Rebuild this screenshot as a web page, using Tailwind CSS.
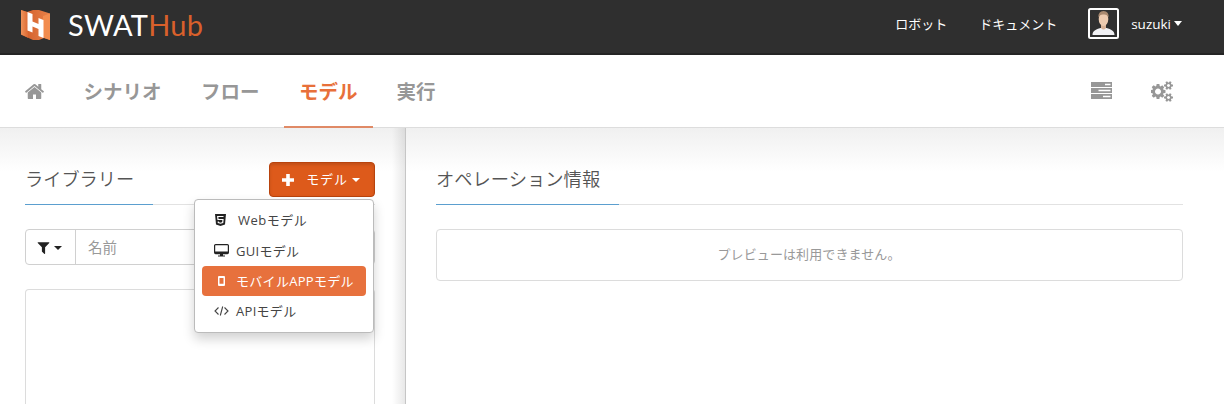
<!DOCTYPE html>
<html lang="ja">
<head>
<meta charset="utf-8">
<title>SWATHub</title>
<script src="https://cdn.jsdelivr.net/npm/@tailwindcss/browser@4"></script>
</head>
<body class="w-[1224px] h-[404px] overflow-hidden bg-white flex flex-col font-['Open_Sans','Noto_Sans_CJK_JP',sans-serif] text-[13px] text-[#444]">
<header class="h-[55px] shrink-0 bg-[#2f2f2f] border-b-2 border-[#242424] flex items-start text-white">
  <svg class="ml-[21px] mt-[10px] w-[29px] h-[30px]" viewBox="0 0 29 30">
    <defs>
      <linearGradient id="g" x1="0" x2="1"><stop offset="0" stop-color="#f0935a"/><stop offset="1" stop-color="#dc6a34"/></linearGradient>
      <linearGradient id="h" x1="0" x2="1"><stop offset="0" stop-color="#d05a26"/><stop offset="1" stop-color="#e8824a"/></linearGradient>
    </defs>
    <path d="M0 0L6 2L12 0H18L29 3.500V30L23 28L18 30H12L0 24.500Z" fill="url(#h)"/>
    <path d="M0 0L7 2.300V27.700L0 24.500Z" fill="url(#g)"/>
    <path d="M22 6L29 3.500V30L22 27.500Z" fill="#f28c4e"/>
    <path d="M6.500 2L11.500 4V11.500L17.500 14V8L22.500 10V28L17.500 26V19L11.500 16.500V22.500L6.500 20.500Z" fill="#fff"/>
  </svg>
  <div class="ml-[18px] mt-[5px] w-[140px] text-[29px] leading-[40px] font-['Lato',sans-serif] whitespace-nowrap tracking-[0.25px]">SWAT<span class="text-[#d9602b]">Hub</span></div>
  <nav class="ml-auto flex items-center h-[47px] leading-5">
    <span>ロボット</span>
    <span class="ml-8">ドキュメント</span>
    <svg class="ml-[31px] w-[31px] h-[31px]" viewBox="0 0 31 31">
      <rect x="1" y="1" width="29" height="29" rx="1.5" fill="#303030" stroke="#fff" stroke-width="2"/>
      <path d="M4.500 27C4.500 22.500 8 21.500 12.500 20H18.500C23 21.500 26.500 22.500 26.500 27Z" fill="#f1f1f4"/>
      <path d="M13 16H18V20Q15.500 23 13 20Z" fill="#d9b296"/>
      <ellipse cx="15.500" cy="11" rx="4.800" ry="7" fill="#edcbb0"/>
      <path d="M10.500 9.500Q10 3 15.500 3Q21 3 20.500 9.500Q19 6 15.500 6.500Q12 6 10.500 9.500Z" fill="#a9896f"/>
    </svg>
    <span class="ml-3 text-[13.500px] font-medium">suzuki</span>
    <svg class="ml-[3px] mr-[42px] w-2 h-[5px]" viewBox="0 0 8 5"><path d="M0 0H8L4 5Z" fill="#fff"/></svg>
  </nav>
</header>
<nav class="h-[73px] shrink-0 border-b border-[#ddd] flex items-stretch text-[19.500px] font-bold text-[#979797] leading-[73px]">
  <svg class="ml-[24px] mt-[26px] w-[21px] h-[21px]" viewBox="0 0 1792 1792" fill="#979797"><path d="M1472 992v480q0 26-19 45t-45 19h-384v-384h-256v384h-384q-26 0-45-19t-19-45v-480q0-1 .5-3t.5-3l575-474 575 474q1 2 1 6zm223-69l-62 74q-8 9-21 11h-3q-13 0-21-7l-692-577-692 577q-12 8-24 7-13-2-21-11l-62-74q-8-10-7-23.500t11-21.500l719-599q32-26 76-26t76 26l244 204v-195q0-14 9-23t23-9h192q14 0 23 9t9 23v408l219 182q10 8 11 21.500t-7 23.500z"/></svg>
  <span class="ml-[23.500px] px-[15px]">シナリオ</span>
  <span class="ml-[9.500px] px-[15px]">フロー</span>
  <span class="ml-[9.500px] -mb-px px-[15px] text-[#e8703a] border-b-2 border-[#e08a66]">モデル</span>
  <span class="ml-[9px] px-[15px]">実行</span>
  <svg class="ml-auto mt-[27px] w-[21px] h-[17px]" viewBox="0 0 21 17"><path fill="#979797" fill-rule="evenodd" d="M0 0H21V5H0ZM14 1.800V3.300H19.500V1.800ZM0 6H21V11H0ZM7.500 7.800V9.300H19.500V7.800ZM0 12H21V17H0ZM12 13.800V15.300H19.500V13.800Z"/></svg>
  <svg class="ml-[39px] mr-[50px] mt-[26px] w-[23px] h-[21px]" viewBox="0 0 1920 1792" fill="#979797"><path d="M832 896q0-106-75-181t-181-75-181 75-75 181 75 181 181 75 181-75 75-181zm768 512q0-52-38-90t-90-38-90 38-38 90q0 53 37.500 90.500t90.500 37.500 90.500-37.500 37.500-90.500zm0-1024q0-52-38-90t-90-38-90 38-38 90q0 53 37.500 90.500t90.500 37.500 90.500-37.500 37.500-90.500zm-384 421v185q0 10-7 19.500t-16 10.500l-155 24q-11 35-32 76 34 48 90 115 7 11 7 20 0 12-7 19-23 30-82.500 89.500t-78.500 59.500q-11 0-21-7l-115-90q-37 19-77 31-11 108-23 155-7 24-30 24h-186q-11 0-20-7.500t-10-17.500l-23-153q-34-10-75-31l-118 89q-7 7-20 7-11 0-21-8-144-133-144-160 0-9 7-19 10-14 41-53t47-61q-23-44-35-82l-152-24q-10-1-17-9.500t-7-19.500v-185q0-10 7-19.500t16-10.500l155-24q11-35 32-76-34-48-90-115-7-11-7-20 0-12 7-20 22-30 82-89t79-59q11 0 21 7l115 90q34-18 77-32 11-108 23-154 7-24 30-24h186q11 0 20 7.500t10 17.500l23 153q34 10 75 31l118-89q8-7 20-7 11 0 21 8 144 133 144 160 0 8-7 19-12 16-42 54t-45 60q23 48 34 82l152 23q10 2 17 10.500t7 19.500zm640 533v140q0 16-149 31-12 27-30 52 51 113 51 138 0 4-4 7-122 71-124 71-8 0-46-47t-52-68q-20 2-30 2t-30-2q-14 21-52 68t-46 47q-2 0-124-71-4-3-4-7 0-25 51-138-18-25-30-52-149-15-149-31v-140q0-16 149-31 13-29 30-52-51-113-51-138 0-4 4-7 4-2 35-20t59-34 30-16q8 0 46 46.500t52 67.500q20-2 30-2t30 2q51-71 92-112l6-2q4 0 124 70 4 3 4 7 0 25-51 138 17 23 30 52 149 15 149 31zm0-1024v140q0 16-149 31-12 27-30 52 51 113 51 138 0 4-4 7-122 71-124 71-8 0-46-47t-52-68q-20 2-30 2t-30-2q-14 21-52 68t-46 47q-2 0-124-71-4-3-4-7 0-25 51-138-18-25-30-52-149-15-149-31v-140q0-16 149-31 13-29 30-52-51-113-51-138 0-4 4-7 4-2 35-20t59-34 30-16q8 0 46 46.500t52 67.500q20-2 30-2t30 2q51-71 92-112l6-2q4 0 124 70 4 3 4 7 0 25-51 138 17 23 30 52 149 15 149 31z"/></svg>
</nav>
<main class="flex-1 min-h-0 flex bg-[linear-gradient(#f0f0f0,#fff_44px)]">
  <section class="relative w-[406px] shrink-0 border-r border-[#c6c6c6] pl-[25px] pr-[30px] bg-[linear-gradient(to_left,rgba(0,0,0,0.09),transparent_13px)] flex flex-col">
    <div class="mt-[34px] h-[43px] shrink-0 border-b border-[#e2e2e2] flex justify-between">
      <h2 class="h-[43px] w-[128px] border-b border-[#5b9fcf] text-[18.200px] leading-[35px] font-[350] text-[#555] whitespace-nowrap">ライブラリー</h2>
      <button class="w-[106px] h-[35px] rounded-[4px] bg-[#dd5a1b] border border-[#b8430d] text-white text-[13px] flex items-center pl-3 shadow-[inset_0_2px_3px_rgba(0,0,0,0.12)]">
        <svg class="w-3 h-3" viewBox="0 0 12 12"><path d="M4.200 0H7.800V4.200H12V7.800H7.800V12H4.200V7.800H0V4.200H4.200Z" fill="#fff"/></svg>
        <span class="ml-[11px] w-[44px] whitespace-nowrap tracking-[0.9px]">モデル</span>
        <svg class="ml-[3px] w-[8px] h-1" viewBox="0 0 8 4"><path d="M0 0H8L4 4Z" fill="#fff"/></svg>
      </button>
    </div>
    <div class="mt-[24px] h-[36px] shrink-0 border-[1.5px] border-[#d0d0d0] rounded-[4px] bg-white flex">
      <div class="w-[50px] border-r-[1.5px] border-[#d0d0d0] flex items-center pl-[10px]">
        <svg class="w-[15px] h-[15px]" viewBox="100 0 1592 1792" fill="#222"><path d="M1595 295q17 41-14 70l-493 493v742q0 42-39 59-13 5-25 5-27 0-45-19l-256-256q-19-19-19-45v-486l-493-493q-31-29-14-70 17-39 59-39h1280q42 0 59 39z"/></svg>
        <svg class="ml-[3px] mt-[2px] w-[8px] h-1" viewBox="0 0 8 4"><path d="M0 0H8L4 4Z" fill="#222"/></svg>
      </div>
      <span class="pl-[12px] text-[14.500px] leading-[35px] text-[#999]">名前</span>
    </div>
    <div class="mt-[24px] flex-1 border-[1.5px] border-b-0 border-[#dcdcdc] rounded-t-[4px] bg-white/50"></div>
    <ul class="absolute left-[194px] top-[71px] w-[180px] h-[134px] bg-white border border-[#bbb] rounded-[4px] shadow-[0_6px_12px_rgba(0,0,0,0.18)] pt-[5px] px-[7px] text-[13px] leading-[30px] text-[#444] whitespace-nowrap tracking-[0.3px]">
      <li class="h-[30.500px] pl-3 flex items-center">
        <svg class="w-[11px] h-[12px] ml-[1px] mr-[12px]" viewBox="0 0 11 12"><path d="M0 0H11L10 10.500L5.500 12L1 10.500Z" fill="#222"/><path d="M8.500 2.500H2.700L3 5.500H8L7.700 8.500L5.500 9.200L3.300 8.500V7.500" fill="none" stroke="#fff" stroke-width="1.200"/></svg>
        <span class="tracking-[0.5px]">Webモデル</span></li>
      <li class="h-[30px] pl-3 flex items-center">
        <svg class="w-[15px] h-[13px] mr-[7px]" viewBox="0 0 15 13"><rect x=".6" y=".6" width="13.800" height="9" rx="1" fill="#fff" stroke="#222" stroke-width="1.200"/><path d="M1 7.500H14V9.500H1ZM6 9.500H9V11.500H11V12.500H4V11.500H6Z" fill="#222"/></svg>
        <span>GUIモデル</span></li>
      <li class="h-[30.500px] pl-3 flex items-center bg-[#e7713d] text-white rounded-[4px]">
        <svg class="w-[7px] h-[10px] ml-[4px] mr-[11px]" viewBox="0 0 7 10"><path fill="#fff" fill-rule="evenodd" d="M1 0H6Q7 0 7 1V9Q7 10 6 10H1Q0 10 0 9V1Q0 0 1 0ZM1.500 2V7.700H5.500V2Z"/></svg>
        <span>モバイルAPPモデル</span></li>
      <li class="h-[30.500px] pl-3 flex items-center">
        <svg class="w-[15px] h-[10px] mr-[7px]" viewBox="0 0 15 10"><path d="M4.500 1.500L1 5L4.500 8.500M10.500 1.500L14 5L10.500 8.500M8.700 .5L6.300 9.500" fill="none" stroke="#444" stroke-width="1.100"/></svg>
        <span>APIモデル</span></li>
    </ul>
  </section>
  <section class="flex-1 pl-[30px] pr-[41px]">
    <div class="mt-[34px] h-[43px] border-b border-[#e2e2e2]">
      <h2 class="h-[43px] w-[183px] border-b border-[#5b9fcf] text-[18.300px] leading-[34px] font-[350] text-[#555] whitespace-nowrap">オペレーション情報</h2>
    </div>
    <div class="mt-[24px] h-[52px] border-[1.5px] border-[#dcdcdc] rounded-[4px] bg-white text-center text-[13px] leading-[49px] text-[#999] tracking-[0.1px] pr-px">プレビューは利用できません。</div>
  </section>
</main>
</body>
</html>
